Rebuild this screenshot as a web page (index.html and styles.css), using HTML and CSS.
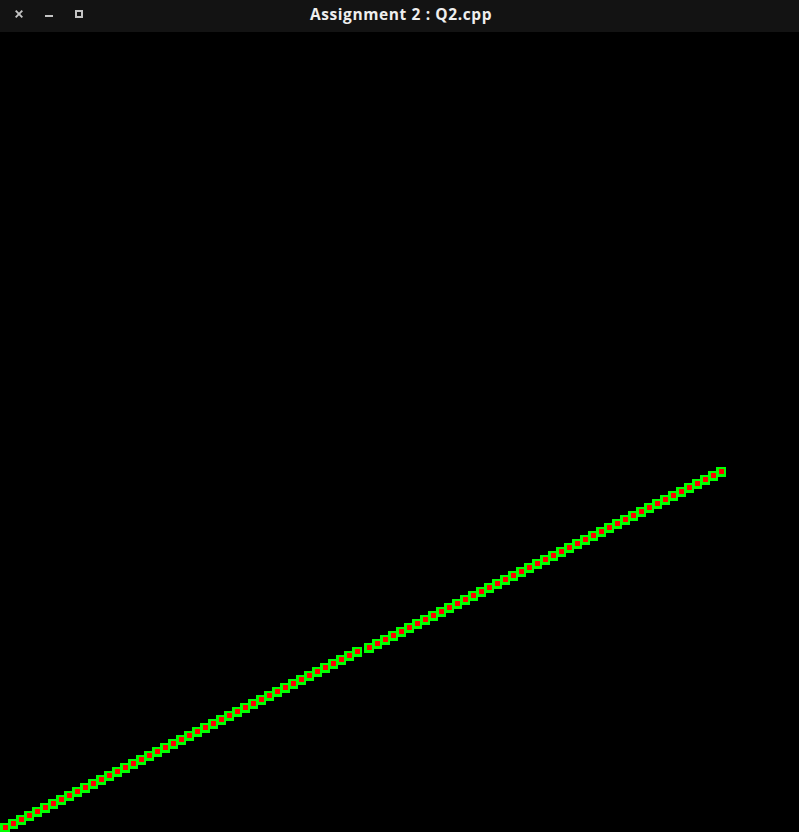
FILE: index.html
```html
<!DOCTYPE html>
<html lang="en">
<head>
<meta charset="utf-8">
<title>Assignment 2 : Q2.cpp</title>
<link rel="stylesheet" href="styles.css">
</head>
<body>
<div class="window">
  <header class="titlebar">
    <div class="controls">
      <svg class="ctl" width="8" height="8" viewBox="0 0 8 8"><path d="M0.7 0.7 L7.3 7.3 M7.3 0.7 L0.7 7.3" stroke="#c4c4c4" stroke-width="1.9" fill="none"/></svg>
      <svg class="ctl" width="8" height="8" viewBox="0 0 8 8"><rect x="0" y="5" width="8" height="2" fill="#c4c4c4"/></svg>
      <svg class="ctl" width="8" height="8" viewBox="0 0 8 8"><rect x="1" y="1" width="6" height="6" stroke="#c4c4c4" stroke-width="2" fill="none"/></svg>
    </div>
    <div class="title">Assignment 2 : Q2.cpp</div>
    <div class="spacer"></div>
  </header>
  <main class="canvas">
    <svg class="plot" width="799" height="800" viewBox="0 32 799 800" shape-rendering="crispEdges">
      <defs>
        <g id="p"><rect width="10" height="10" fill="#00ff00"/><rect x="3" y="2" width="5" height="5" fill="#ff0000"/></g>
      </defs>
      <use href="#p" x="0" y="823"/><use href="#p" x="8" y="819"/><use href="#p" x="16" y="815"/><use href="#p" x="24" y="811"/><use href="#p" x="32" y="807"/>
      <use href="#p" x="40" y="803"/><use href="#p" x="48" y="799"/><use href="#p" x="56" y="795"/><use href="#p" x="64" y="791"/><use href="#p" x="72" y="787"/>
      <use href="#p" x="80" y="783"/><use href="#p" x="88" y="779"/><use href="#p" x="96" y="775"/><use href="#p" x="104" y="771"/><use href="#p" x="112" y="767"/>
      <use href="#p" x="120" y="763"/><use href="#p" x="128" y="759"/><use href="#p" x="136" y="755"/><use href="#p" x="144" y="751"/><use href="#p" x="152" y="747"/>
      <use href="#p" x="160" y="743"/><use href="#p" x="168" y="739"/><use href="#p" x="176" y="735"/><use href="#p" x="184" y="731"/><use href="#p" x="192" y="727"/>
      <use href="#p" x="200" y="723"/><use href="#p" x="208" y="719"/><use href="#p" x="216" y="715"/><use href="#p" x="224" y="711"/><use href="#p" x="232" y="707"/>
      <use href="#p" x="240" y="703"/><use href="#p" x="248" y="699"/><use href="#p" x="256" y="695"/><use href="#p" x="264" y="691"/><use href="#p" x="272" y="687"/>
      <use href="#p" x="280" y="683"/><use href="#p" x="288" y="679"/><use href="#p" x="296" y="675"/><use href="#p" x="304" y="671"/><use href="#p" x="312" y="667"/>
      <use href="#p" x="320" y="663"/><use href="#p" x="328" y="659"/><use href="#p" x="336" y="655"/><use href="#p" x="344" y="651"/><use href="#p" x="352" y="647"/>
      <use href="#p" x="364" y="643"/><use href="#p" x="372" y="639"/><use href="#p" x="380" y="635"/><use href="#p" x="388" y="631"/><use href="#p" x="396" y="627"/>
      <use href="#p" x="404" y="623"/><use href="#p" x="412" y="619"/><use href="#p" x="420" y="615"/><use href="#p" x="428" y="611"/><use href="#p" x="436" y="607"/>
      <use href="#p" x="444" y="603"/><use href="#p" x="452" y="599"/><use href="#p" x="460" y="595"/><use href="#p" x="468" y="591"/><use href="#p" x="476" y="587"/>
      <use href="#p" x="484" y="583"/><use href="#p" x="492" y="579"/><use href="#p" x="500" y="575"/><use href="#p" x="508" y="571"/><use href="#p" x="516" y="567"/>
      <use href="#p" x="524" y="563"/><use href="#p" x="532" y="559"/><use href="#p" x="540" y="555"/><use href="#p" x="548" y="551"/><use href="#p" x="556" y="547"/>
      <use href="#p" x="564" y="543"/><use href="#p" x="572" y="539"/><use href="#p" x="580" y="535"/><use href="#p" x="588" y="531"/><use href="#p" x="596" y="527"/>
      <use href="#p" x="604" y="523"/><use href="#p" x="612" y="519"/><use href="#p" x="620" y="515"/><use href="#p" x="628" y="511"/><use href="#p" x="636" y="507"/>
      <use href="#p" x="644" y="503"/><use href="#p" x="652" y="499"/><use href="#p" x="660" y="495"/><use href="#p" x="668" y="491"/><use href="#p" x="676" y="487"/>
      <use href="#p" x="684" y="483"/><use href="#p" x="692" y="479"/><use href="#p" x="700" y="475"/><use href="#p" x="708" y="471"/><use href="#p" x="716" y="467"/>
    </svg>
  </main>
</div>
</body>
</html>
```
FILE: styles.css
```css
html, body {
  margin: 0;
  padding: 0;
  background: #000;
  overflow: hidden;
}

.window {
  width: 799px;
  height: 832px;
  display: flex;
  flex-direction: column;
  background: #000;
}

.titlebar {
  height: 32px;
  flex: none;
  background: #131313;
  display: grid;
  grid-template-columns: 1fr auto 1fr;
  align-items: start;
}

.controls {
  display: flex;
  gap: 22px;
  padding: 10px 0 0 15px;
}

.ctl {
  display: block;
}

.title {
  font-family: "Open Sans", "DejaVu Sans", sans-serif;
  font-weight: 700;
  font-size: 15.5px;
  letter-spacing: 0.6px;
  line-height: 20px;
  padding-top: 4px;
  color: #eeeeee;
  white-space: nowrap;
  padding-left: 3px;
}

.canvas {
  flex: 1;
  background: #000;
  overflow: hidden;
}

.plot {
  display: block;
}
```
